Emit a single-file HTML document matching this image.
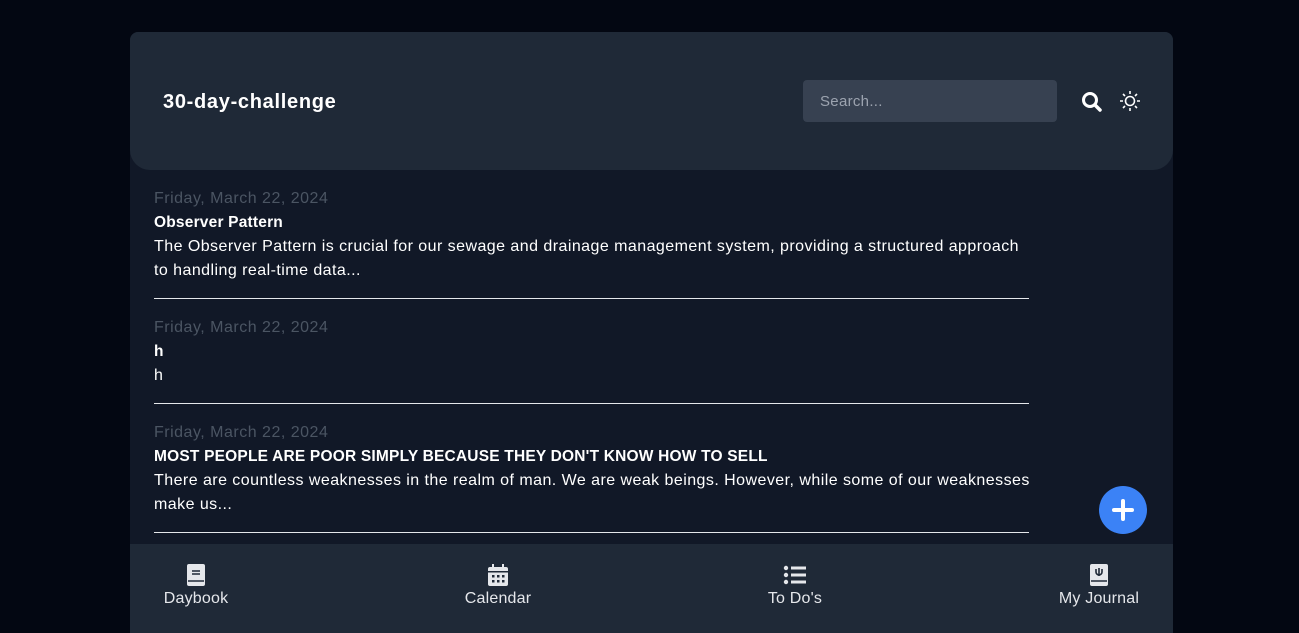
<!DOCTYPE html>
<html><head><style>
*{box-sizing:border-box;margin:0;padding:0}
body{width:1299px;height:633px;background:#030712;font-family:"Liberation Sans",sans-serif;overflow:hidden;position:relative}
.card{position:absolute;left:130px;top:32px;width:1043px;height:601px;background:#111827;border-radius:8px 8px 0 0;overflow:hidden}
.hdr{position:absolute;left:0;top:0;width:1043px;height:138px;background:#1f2937;border-radius:0 0 20px 20px}
.title{position:absolute;left:33px;top:59px;color:#fff;font-weight:bold;font-size:20px;letter-spacing:0.7px}
.search{position:absolute;left:673px;top:48px;width:254px;height:42px;background:#374151;border-radius:4px;color:#9ca3af;font-size:15px;padding:13px 17px;letter-spacing:0.3px}
.entry{position:absolute;left:24px;width:875px;border-bottom:1px solid #e5e7eb;color:#fff;font-size:16px;line-height:24px;padding-top:1px;letter-spacing:0.45px;white-space:nowrap}
.date{color:#4b5563;font-size:16px;letter-spacing:0.5px}
.t{font-weight:bold;font-size:15.5px;letter-spacing:0.2px}
.nav{position:absolute;left:0;top:512px;width:1043px;height:89px;background:#1f2937}
.ni{position:absolute;top:20px;color:#e5e7eb;font-size:16px;text-align:center;letter-spacing:0.2px}
.ni svg{display:block;margin:0 auto 4px}
.plus{position:absolute;left:969px;top:454px;width:48px;height:48px;border-radius:50%;background:#3b82f6}
</style></head><body>
<div class="card">
<div class="hdr">
<div class="title">30-day-challenge</div>
<div class="search">Search...</div>
<svg style="position:absolute;left:950px;top:58px" width="24" height="24" viewBox="0 0 24 24"><circle cx="10" cy="10" r="6.5" fill="none" stroke="#fff" stroke-width="3"/><path d="M15 15l5 5" stroke="#fff" stroke-width="3.5" stroke-linecap="round"/></svg>
<svg style="position:absolute;left:989px;top:58px" width="22" height="22" viewBox="0 0 22 22" stroke="#fff" stroke-width="1.6" fill="none"><circle cx="11" cy="11" r="4.5"/><path d="M11 1v3M11 18v3M1 11h3M18 11h3M4 4l2 2M16 16l2 2M4 18l2-2M16 6l2-2"/></svg>
</div>
<div class="entry" style="top:154px;height:113px"><div class="date">Friday, March 22, 2024</div><div class="t">Observer Pattern</div><div>The Observer Pattern is crucial for our sewage and drainage management system, providing a structured approach<br>to handling real-time data...</div></div>
<div class="entry" style="top:283px;height:89px"><div class="date">Friday, March 22, 2024</div><div class="t">h</div><div>h</div></div>
<div class="entry" style="top:388px;height:113px"><div class="date">Friday, March 22, 2024</div><div class="t">MOST PEOPLE ARE POOR SIMPLY BECAUSE THEY DON'T KNOW HOW TO SELL</div><div style="letter-spacing:0.45px">There are countless weaknesses in the realm of man. We are weak beings. However, while some of our weaknesses<br>make us...</div></div>
<div class="plus"><svg width="48" height="48" viewBox="0 0 48 48"><path d="M24 15v18M15 24h18" stroke="#fff" stroke-width="4" stroke-linecap="round"/></svg></div>
<div class="nav">
<div class="ni" style="left:32px;width:68px"><svg width="20" height="22" viewBox="0 0 20 22"><rect x="1" y="0" width="18" height="22" rx="2" fill="#e5e7eb"/><path d="M6 7h8M6 10h8M2 17h16" stroke="#1f2937" stroke-width="1.6"/></svg>Daybook</div>
<div class="ni" style="left:334px;width:68px"><svg width="22" height="22" viewBox="0 0 22 22" fill="#e5e7eb"><rect x="5" y="0" width="2" height="4"/><rect x="15" y="0" width="2" height="4"/><rect x="1" y="3" width="20" height="19" rx="2"/><g fill="#1f2937"><rect x="1" y="7" width="20" height="1.5"/><rect x="5" y="11" width="2.5" height="2.5"/><rect x="10" y="11" width="2.5" height="2.5"/><rect x="15" y="11" width="2.5" height="2.5"/><rect x="5" y="16" width="2.5" height="2.5"/><rect x="10" y="16" width="2.5" height="2.5"/><rect x="15" y="16" width="2.5" height="2.5"/></g></svg>Calendar</div>
<div class="ni" style="left:630px;width:70px"><svg width="24" height="22" viewBox="0 0 24 22" fill="#e5e7eb"><circle cx="3" cy="4" r="2.2"/><circle cx="3" cy="11" r="2.2"/><circle cx="3" cy="18" r="2.2"/><rect x="8" y="2.5" width="15" height="3"/><rect x="8" y="9.5" width="15" height="3"/><rect x="8" y="16.5" width="15" height="3"/></svg>To Do's</div>
<div class="ni" style="left:922px;width:94px"><svg width="20" height="22" viewBox="0 0 20 22"><rect x="1" y="0" width="18" height="22" rx="2" fill="#e5e7eb"/><path d="M7 5v3a3 3 0 006 0V5M10 4v8M2 17h16" stroke="#1f2937" stroke-width="1.6" fill="none"/></svg>My Journal</div>
</div>
</div>
</body></html>
